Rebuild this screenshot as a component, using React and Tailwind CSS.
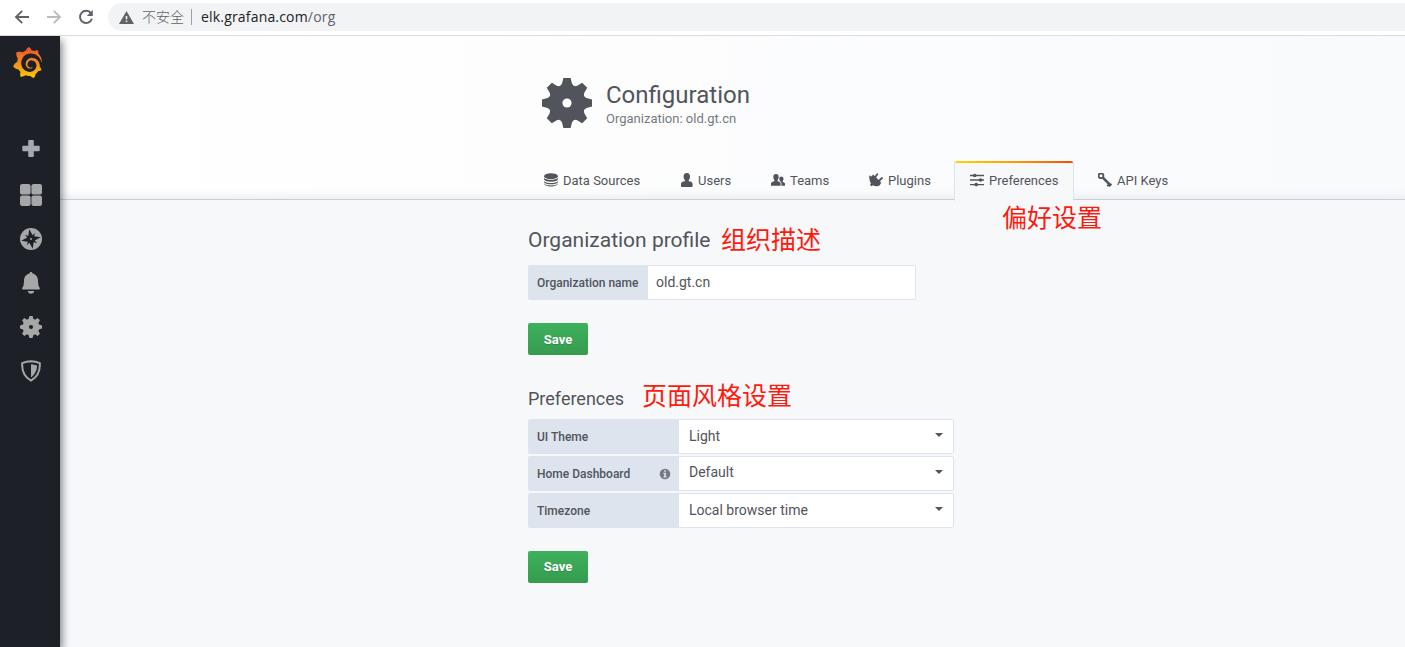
import React from "react";
import { SiGrafana } from "react-icons/si";

const ANGLES = [0, 45, 90, 135, 180, 225, 270, 315];

function Gear({ className, hole, holeR = 4.6 }) {
  return (
    <svg viewBox="-25 -25 50 50" className={className} fill="currentColor">
      <circle r="17.6" />
      {ANGLES.map((a) => (
        <path key={a} transform={`rotate(${a})`} d="M-3.6 -25H3.6L5 -19.5Q5.6 -17.6 8.5 -16L0 0L-8.5 -16Q-5.6 -17.6 -5 -19.5Z" />
      ))}
      <circle r={holeR} className={hole} />
    </svg>
  );
}

function SideItem({ children }) {
  return <div className="flex h-11 w-[62px] items-center justify-center text-[#a6a7a9]">{children}</div>;
}

function Sidebar() {
  return (
    <nav className="relative z-10 flex w-[60px] shrink-0 flex-col bg-[#1e2028] shadow-[2px_4px_8px_0_rgba(40,45,60,0.6)]">
      <div className="flex h-[53px] w-[57px] items-center justify-center pr-0.5">
        <svg width="0" height="0" className="absolute">
          <linearGradient id="brand" x1="0" y1="0" x2="0" y2="1">
            <stop offset="0.1" stopColor="#f05a28" />
            <stop offset="1" stopColor="#fbca0a" />
          </linearGradient>
        </svg>
        <SiGrafana className="size-[31px]" style={{ fill: "url(#brand)" }} />
      </div>
      <div className="mt-[38px] flex flex-col">
        <SideItem>
          <svg width="18" height="18" viewBox="0 0 18 18" fill="#a5a9b0">
            <rect x="6.2" y="0" width="5.6" height="17" rx="1" />
            <rect x="0.3" y="5.7" width="17.4" height="5.6" rx="1" />
          </svg>
        </SideItem>
        <div className="mt-0.5">
          <SideItem>
            <svg width="22" height="22" viewBox="0 0 22 22" fill="currentColor">
              <rect width="10.6" height="10.6" rx="2.2" />
              <rect x="11.4" width="10.6" height="10.6" rx="2.2" />
              <rect y="11.4" width="10.6" height="10.6" rx="2.2" />
              <rect x="11.4" y="11.4" width="10.6" height="10.6" rx="2.2" />
            </svg>
          </SideItem>
        </div>
        <SideItem>
          <svg width="22" height="22" viewBox="-11 -11 22 22" fill="currentColor">
            <circle r="11" />
            <g fill="#1e2028" transform="rotate(-10)">
              <path d="M0 -9.8L2.5 -2.5L9.8 0L2.5 2.5L0 9.8L-2.5 2.5L-9.8 0L-2.5 -2.5Z" />
              <path d="M5.2 -5.2L2.3 0L5.2 5.2L0 2.3L-5.2 5.2L-2.3 0L-5.2 -5.2L0 -2.3Z" />
            </g>
            <circle r="1" />
          </svg>
        </SideItem>
        <SideItem>
          <svg width="18" height="22" viewBox="0 0 18 22" fill="currentColor">
            <path d="M9 0C9.9 0 10.4.6 10.4 1.4C14 2.1 16 5 16 8.6C16 12.5 16.5 14.5 17.6 15.8C18 16.5 17.9 17.6 17.2 17.6H.8C.1 17.6 0 16.5.4 15.8C1.5 14.5 2 12.5 2 8.6C2 5 4 2.1 7.6 1.4C7.6.6 8.1 0 9 0ZM5.8 19H12.2C11.9 20.8 10.7 21.8 9 21.8S6.1 20.8 5.8 19Z" />
          </svg>
        </SideItem>
        <SideItem>
          <Gear className="size-[22px]" hole="fill-[#1e2028]" holeR={4.8} />
        </SideItem>
        <SideItem>
          <svg width="20" height="22" viewBox="0 0 20 22">
            <path d="M10 1.2C13 1.3 16 2 18.8 3.2C19.3 10.8 15.8 17.2 10 20.7C4.2 17.2.7 10.8 1.2 3.2C4 2 7 1.3 10 1.2Z" fill="none" stroke="currentColor" strokeWidth="2" />
            <path d="M10 4.3C12.1 4.4 14.2 4.9 16 5.5C16.1 10.2 14 14.5 10 17.4Z" fill="currentColor" />
          </svg>
        </SideItem>
      </div>
    </nav>
  );
}

function BrowserBar() {
  return (
    <header className="flex h-9 shrink-0 items-center border-b border-[#dadce0] bg-white">
      <div className="flex w-[108px] items-center pb-px pl-[14px]">
        <svg width="16" height="16" viewBox="0 0 16 16" fill="none" stroke="#5f6368" strokeWidth="1.9">
          <path d="M15 8H2.5M8.2 1.8L2 8L8.2 14.2" />
        </svg>
        <svg width="16" height="16" viewBox="0 0 16 16" fill="none" stroke="#babcbe" strokeWidth="1.9" className="ml-4">
          <path d="M1 8H13.5M7.8 1.8L14 8L7.8 14.2" />
        </svg>
        <svg width="16" height="16" viewBox="0 0 16 16" fill="none" stroke="#5f6368" strokeWidth="2" className="ml-4">
          <path d="M13 4.2A6.1 6.1 0 1 0 13.9 9.8" />
          <path d="M14.8 1V7H8.8Z" fill="#5f6368" stroke="none" />
        </svg>
      </div>
      <div className="mb-px flex h-7 grow items-center rounded-l-full bg-[#f1f3f4] pl-[11px] font-['Open_Sans','Noto_Sans_CJK_SC',sans-serif] text-[14px] text-[#5f6368]">
        <svg width="15" height="13" viewBox="0 0 15 13">
          <path d="M7.5 0L15 13H0Z" fill="#5f6368" />
          <path d="M6.7 5H8.3V8.3H6.7ZM6.7 9.5H8.3V11.1H6.7Z" fill="#f1f3f4" />
        </svg>
        <span className="ml-2 w-[49px] whitespace-nowrap pb-0.5 font-['Noto_Sans_CJK_SC',sans-serif] font-light leading-5">不安全</span>
        <span className="h-4 w-px bg-[#9aa0a6]" />
        <span className="ml-[9px] whitespace-nowrap leading-5 tracking-[0.18px]">
          <span className="text-[#202124]">elk.grafana.com</span>/org
        </span>
      </div>
    </header>
  );
}

const icons = {
  data: (
    <svg width="14" height="14" viewBox="0 0 14 14" fill="currentColor">
      <ellipse cx="7" cy="3.2" rx="6.9" ry="3" />
      <path d="M.1 4.8C1.6 7.6 12.4 7.6 13.9 4.8V6.4C12.8 9.4 1.2 9.4.1 6.4ZM.1 7.9C1.6 10.7 12.4 10.7 13.9 7.9V9.2C12.8 12 1.2 12 .1 9.2ZM.1 10.6C1.6 13.2 12.4 13.2 13.9 10.6C13 14.6 1 14.6.1 10.6Z" />
    </svg>
  ),
  user: (
    <svg width="13" height="14" viewBox="0 0 13 14" fill="currentColor">
      <path d="M6.8 0C9 0 10 1.5 10 3.4C10 5.3 9.3 6.3 8.7 7.2V8.3C10.8 8.7 12.6 9.3 12.6 11V13.2Q12.6 14 11.8 14H1.8Q1 14 1 13.2V11C1 9.3 2.8 8.7 4.9 8.3V7.2C4.3 6.3 3.6 5.3 3.6 3.4C3.6 1.5 4.6 0 6.8 0Z" />
    </svg>
  ),
  team: (
    <svg width="14" height="14" viewBox="0 0 14 14" fill="currentColor">
      <path d="M5 1C6.9 1 7.7 2.3 7.7 4C7.7 5.5 7.2 6.4 6.6 7.1V8.2C8.5 8.6 9.6 9.1 9.6 10.5V12.7H0V10.5C0 9.1 1.6 8.6 3.4 8.2V7.1C2.8 6.4 2.3 5.5 2.3 4C2.3 2.3 3.1 1 5 1Z" />
      <path d="M10.4 3.5C11.8 3.5 12.5 4.5 12.5 5.7C12.5 6.9 12.1 7.5 11.7 8V9C13.2 9.3 14 9.8 14 10.8V12.7H10.4V10.5C10.4 9.5 10 8.8 9.1 8.3V8C8.7 7.5 8.3 6.9 8.3 5.7C8.3 4.5 9 3.5 10.4 3.5Z" />
    </svg>
  ),
  plug: (
    <svg width="14" height="14" viewBox="0 0 14 14" fill="currentColor">
      <path d="M.3 2.2L2.2 3.6L4.2 1.6L12.2 9.6L10.8 12.2C9 13.6 6 13.7 4 12.2L2.4 13.2L1 11.8L1.9 10.2C.4 8 .2 5 .3 2.2Z" />
      <path d="M6.2 4.2L8.2 1.3M9.8 8L13 5" stroke="currentColor" strokeWidth="1.8" strokeLinecap="round" />
    </svg>
  ),
  sliders: (
    <svg width="14" height="14" viewBox="0 0 14 14" fill="currentColor">
      <path d="M0 1.8H14V3.2H0ZM0 6.3H14V7.7H0ZM0 10.9H14V12.3H0Z" />
      <circle cx="4.7" cy="2.5" r="1.8" />
      <circle cx="10.5" cy="7" r="1.8" />
      <circle cx="6.2" cy="11.6" r="1.8" />
    </svg>
  ),
  key: (
    <svg width="14" height="14" viewBox="0 0 14 14" fill="none" stroke="currentColor">
      <circle cx="3" cy="2.8" r="2.4" strokeWidth="1.8" />
      <path d="M4.6 4.4L12.6 12.4" strokeWidth="2.5" />
      <path d="M11.6 10.6L9.3 13.2M13.6 11L11 13.4" strokeWidth="1.8" />
    </svg>
  ),
};

function Tab({ icon, label, width, active }) {
  return (
    <div
      className={
        "flex h-[39px] shrink-0 items-center gap-[5px] whitespace-nowrap text-[13px] leading-5 " +
        width +
        (active
          ? " relative -mb-px h-[40px] rounded-t-[3px] border-x border-[#dde4ed] bg-[#f7f8fa] px-[15px]"
          : " px-4")
      }
    >
      {active && <span className="absolute inset-x-0 top-0 h-0.5 rounded-t-sm bg-linear-to-r from-[#ffd500] via-[#ff9900] to-[#ff4400]" />}
      <span className={active ? "shrink-0 pb-0.5" : "shrink-0 pb-px"}>{icons[icon]}</span>
      <span>{label}</span>
    </div>
  );
}

function PageHeader() {
  return (
    <div className="h-[164px] border-b border-[#c7d0d9] bg-linear-to-r from-white to-[#f9fafc] pl-[468px] shadow-[inset_0_-10px_12px_-10px_#dfe4ea]">
      <div className="flex h-[125px] items-start pl-[14px] pt-[42px]">
        <Gear className="size-[50px]" hole="fill-white" />
        <div className="ml-[14px] pt-[1px]">
          <h1 className="text-[24px] leading-8">Configuration</h1>
          <div className="text-[13px] leading-4 text-[#767980]">Organization: old.gt.cn</div>
        </div>
      </div>
      <div className="flex gap-2">
        <Tab icon="data" label="Data Sources" width="w-[128px]" />
        <Tab icon="user" label="Users" width="w-[83px]" />
        <Tab icon="team" label="Teams" width="w-[90px]" />
        <Tab icon="plug" label="Plugins" width="w-[93px]" />
        <Tab icon="sliders" label="Preferences" width="w-[120px]" active />
        <Tab icon="key" label="API Keys" width="w-[104px]" />
      </div>
    </div>
  );
}

function Note({ className, children }) {
  return (
    <span className={"absolute whitespace-nowrap font-['Noto_Sans_CJK_SC',sans-serif] text-[25px] font-normal leading-8 text-[#ff1a0e] " + className}>
      {children}
    </span>
  );
}

function SaveButton({ pad }) {
  return (
    <button
      className={
        "block h-8 w-[60px] rounded-[2px] bg-linear-to-b from-[#3eb15b] to-[#369b4f] text-[13px] font-bold text-white [text-shadow:0_1px_1px_rgba(0,0,0,0.15)] " +
        (pad ? "leading-[34px]" : "leading-8")
      }
    >
      Save
    </button>
  );
}

function SelectRow({ label, value, info, raised }) {
  return (
    <div className="flex h-[35px] w-[426px]">
      <div className="flex w-[151px] items-center justify-between rounded-l-[2px] bg-[#dde4ed] pl-[9px] pr-[8px] text-[12px] font-medium">
        {label}
        {info && (
          <svg width="12" height="12" viewBox="0 0 12 12">
            <circle cx="6" cy="6" r="5.3" fill="#767980" />
            <path d="M5.2 2.3H6.9V3.8H5.2ZM4.4 4.8H6.9V8.4H7.7V9.5H4.4V8.4H5.2V5.9H4.4Z" fill="#dde4ed" />
          </svg>
        )}
      </div>
      <div className="flex grow items-center justify-between rounded-r-[2px] border border-l-0 border-[#dde4ed] bg-white pl-[10px] pr-[10px] text-[14px]">
        <span className={raised ? "pb-[3px]" : "pb-px"}>{value}</span>
        <svg width="8" height="4" viewBox="0 0 8 4" className="mb-[3px]">
          <path d="M0 0H8L4 4Z" fill="#52545c" />
        </svg>
      </div>
    </div>
  );
}

export default function App() {
  return (
    <div className="flex h-[647px] w-full flex-col overflow-hidden bg-[#f7f8fa] font-['Roboto',sans-serif] text-[#52545c]">
      <BrowserBar />
      <div className="flex min-h-0 grow overflow-hidden">
        <Sidebar />
        <main className="grow">
          <PageHeader />
          <div className="relative pl-[468px] pt-[24px]">
            <Note className="left-[942px] top-0">偏好设置</Note>
            <Note className="left-[661px] top-[22px]">组织描述</Note>
            <Note className="left-[582px] top-[178px]">页面风格设置</Note>
            <h2 className="text-[21px] leading-8">Organization profile</h2>
            <div className="mt-[9px] flex h-[35px] w-[388px]">
              <label className="flex w-[120px] items-center whitespace-nowrap rounded-l-[2px] bg-[#dde4ed] pl-[9px] text-[12px] font-medium">
                Organization name
              </label>
              <div className="flex grow items-center rounded-r-[2px] border border-l-0 border-[#dde4ed] bg-white pb-px pl-2 text-[14px]">old.gt.cn</div>
            </div>
            <div className="mt-[23px]">
              <SaveButton pad />
            </div>
            <h3 className="mt-8 text-[18px] leading-6">Preferences</h3>
            <div className="mt-2 flex flex-col gap-0.5">
              <SelectRow label="UI Theme" value="Light" />
              <SelectRow label="Home Dashboard" value="Default" info raised />
              <SelectRow label="Timezone" value="Local browser time" />
            </div>
            <div className="mt-[23px]">
              <SaveButton />
            </div>
          </div>
        </main>
      </div>
    </div>
  );
}
